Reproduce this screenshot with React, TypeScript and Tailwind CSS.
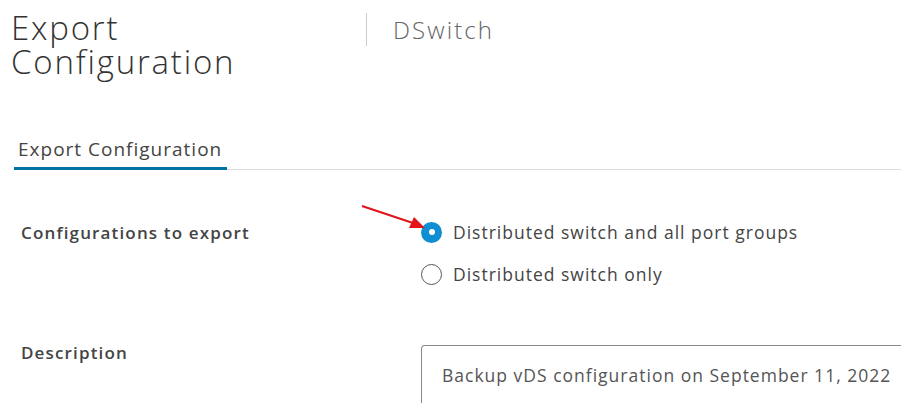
export default function App() {
  return (
    <div className="w-[901px] h-[403px] overflow-hidden bg-white text-[#333] font-['Open_Sans',sans-serif] relative">
      {/* header */}
      <div className="flex items-start pt-[11px]">
        <h1 className="pl-[11px] w-[366px] text-[33px] leading-[34px] font-light tracking-[1.8px] text-[#333]">
          Export
          <br />
          Configuration
        </h1>
        <div className="mt-[2px] border-l border-[#ccc] h-[33px] pl-[26px] text-[24px] leading-[34px] tracking-[2.1px] text-[#666] font-light">
          DSwitch
        </div>
      </div>

      {/* tab bar */}
      <div className="mt-[58px] flex items-end border-b border-[#ddd] ml-[14px]">
        <div className="px-[4px] pb-[6px] border-b-[3px] border-[#0072a3] -mb-[1px] text-[19px] leading-[24px] tracking-[1px] text-[#444] w-[213px] whitespace-nowrap">
          Export Configuration
        </div>
      </div>

      {/* form */}
      <div className="pl-[21px] pt-[50px]">
        <div className="grid grid-cols-[400px_1fr]">
          <div className="text-[17px] leading-[24px] font-semibold tracking-[1.15px] text-[#444] pt-[1px] whitespace-nowrap">
            Configurations to export
          </div>
          <div className="flex flex-col gap-[18px]">
            <label className="flex items-center gap-[11px] text-[17.5px] leading-[24px] tracking-[1px] text-[#444] whitespace-nowrap">
              <span className="w-[21px] h-[21px] shrink-0 rounded-full bg-[#0f8fd1] flex items-center justify-center">
                <span className="w-[6px] h-[6px] rounded-full bg-white" />
              </span>
              Distributed switch and all port groups
            </label>
            <label className="flex items-center gap-[11px] text-[17.5px] leading-[24px] tracking-[1px] text-[#444] whitespace-nowrap">
              <span className="w-[21px] h-[21px] shrink-0 rounded-full border-[1.5px] border-[#555] bg-white" />
              Distributed switch only
            </label>
          </div>
        </div>

        <div className="grid grid-cols-[400px_1fr] mt-[59px]">
          <div className="text-[17px] leading-[24px] font-semibold tracking-[1.15px] text-[#444] -mt-[4px]">Description</div>
          <div className="border-l border-t border-[#888] rounded-tl-[4px] h-[80px] pl-[20px] pt-[17px] text-[17.5px] leading-[24px] tracking-[1px] text-[#555] whitespace-nowrap">
            Backup vDS configuration on September 11, 2022
          </div>
        </div>
      </div>

      {/* red annotation arrow */}
      <svg className="absolute left-[355px] top-[198px]" width="80" height="40" viewBox="0 0 80 40">
        <line x1="7" y1="8" x2="58" y2="25" stroke="#e3131b" strokeWidth="2" />
        <polygon points="70,30 54,30 59,19" fill="#e3131b" />
      </svg>
    </div>
  );
}
